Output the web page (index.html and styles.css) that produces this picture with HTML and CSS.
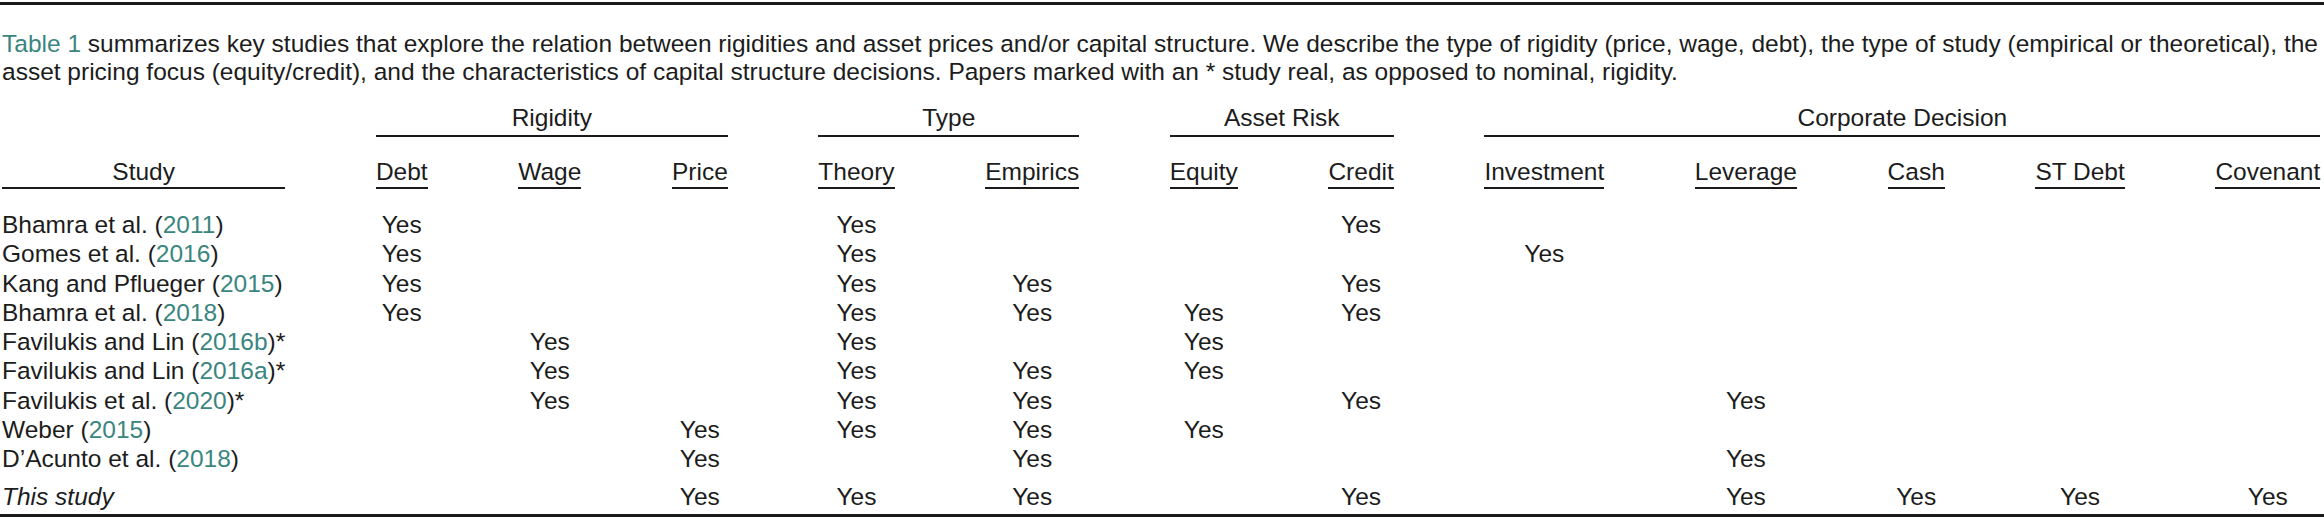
FILE: index.html
```html
<!DOCTYPE html>
<html lang="en">
<head>
<meta charset="utf-8">
<title>Table 1</title>
<link rel="stylesheet" href="styles.css">
</head>
<body>
<div class="figure">
  <p class="caption"><span class="ref">Table 1</span> summarizes key studies that explore the relation between rigidities and asset prices and/or capital structure. We describe the type of rigidity (price, wage, debt), the type of study (empirical or theoretical), the asset pricing focus (equity/credit), and the characteristics of capital structure decisions. Papers marked with an * study real, as opposed to nominal, rigidity.</p>
  <table class="studies">
    <thead>
      <tr class="groups">
        <th></th>
        <th colspan="3"><div class="rule">Rigidity</div></th>
        <th colspan="2"><div class="rule">Type</div></th>
        <th colspan="2"><div class="rule">Asset Risk</div></th>
        <th colspan="5"><div class="rule">Corporate Decision</div></th>
      </tr>
      <tr class="cols">
        <th><div class="ul">Study</div></th>
        <th><div class="ul">Debt</div></th>
        <th><div class="ul">Wage</div></th>
        <th><div class="ul">Price</div></th>
        <th><div class="ul">Theory</div></th>
        <th><div class="ul">Empirics</div></th>
        <th><div class="ul">Equity</div></th>
        <th><div class="ul">Credit</div></th>
        <th><div class="ul">Investment</div></th>
        <th><div class="ul">Leverage</div></th>
        <th><div class="ul">Cash</div></th>
        <th><div class="ul">ST Debt</div></th>
        <th><div class="ul">Covenant</div></th>
      </tr>
    </thead>
    <tbody>
      <tr>
        <td>Bhamra et al. (<span class="ref">2011</span>)</td>
        <td>Yes</td><td></td><td></td>
        <td>Yes</td><td></td>
        <td></td><td>Yes</td>
        <td></td><td></td><td></td><td></td><td></td>
      </tr>
      <tr>
        <td>Gomes et al. (<span class="ref">2016</span>)</td>
        <td>Yes</td><td></td><td></td>
        <td>Yes</td><td></td>
        <td></td><td></td>
        <td>Yes</td><td></td><td></td><td></td><td></td>
      </tr>
      <tr>
        <td>Kang and Pflueger (<span class="ref">2015</span>)</td>
        <td>Yes</td><td></td><td></td>
        <td>Yes</td><td>Yes</td>
        <td></td><td>Yes</td>
        <td></td><td></td><td></td><td></td><td></td>
      </tr>
      <tr>
        <td>Bhamra et al. (<span class="ref">2018</span>)</td>
        <td>Yes</td><td></td><td></td>
        <td>Yes</td><td>Yes</td>
        <td>Yes</td><td>Yes</td>
        <td></td><td></td><td></td><td></td><td></td>
      </tr>
      <tr>
        <td>Favilukis and Lin (<span class="ref">2016b</span>)*</td>
        <td></td><td>Yes</td><td></td>
        <td>Yes</td><td></td>
        <td>Yes</td><td></td>
        <td></td><td></td><td></td><td></td><td></td>
      </tr>
      <tr>
        <td>Favilukis and Lin (<span class="ref">2016a</span>)*</td>
        <td></td><td>Yes</td><td></td>
        <td>Yes</td><td>Yes</td>
        <td>Yes</td><td></td>
        <td></td><td></td><td></td><td></td><td></td>
      </tr>
      <tr>
        <td>Favilukis et al. (<span class="ref">2020</span>)*</td>
        <td></td><td>Yes</td><td></td>
        <td>Yes</td><td>Yes</td>
        <td></td><td>Yes</td>
        <td></td><td>Yes</td><td></td><td></td><td></td>
      </tr>
      <tr>
        <td>Weber (<span class="ref">2015</span>)</td>
        <td></td><td></td><td>Yes</td>
        <td>Yes</td><td>Yes</td>
        <td>Yes</td><td></td>
        <td></td><td></td><td></td><td></td><td></td>
      </tr>
      <tr>
        <td>D’Acunto et al. (<span class="ref">2018</span>)</td>
        <td></td><td></td><td>Yes</td>
        <td></td><td>Yes</td>
        <td></td><td></td>
        <td></td><td>Yes</td><td></td><td></td><td></td>
      </tr>
      <tr class="ours">
        <td><em>This study</em></td>
        <td></td><td></td><td>Yes</td>
        <td>Yes</td><td>Yes</td>
        <td></td><td>Yes</td>
        <td></td><td>Yes</td><td>Yes</td><td>Yes</td><td>Yes</td>
      </tr>
    </tbody>
  </table>
</div>
</body>
</html>
```

FILE: styles.css
```css
html, body {
  margin: 0;
  padding: 0;
  background: #ffffff;
}

body {
  font-family: "Liberation Sans", Arial, sans-serif;
  font-size: 24.5px;
  color: #1c1c1c;
}

.figure {
  margin-top: 2px;
  padding: 0 0 0 2px;
  border-top: 3px solid #1a1a1a;
  border-bottom: 3px solid #1a1a1a;
}

.caption {
  margin: 25px 0 18px 0;
  line-height: 28px;
}

.ref {
  color: #3b8580;
}

.studies {
  border-collapse: collapse;
  border-spacing: 0;
}

.studies th,
.studies td {
  padding: 0 45.3px;
  font-weight: normal;
  text-align: center;
  white-space: nowrap;
}

.studies th:first-child,
.studies td:first-child {
  padding-left: 0;
}

.studies th:last-child,
.studies td:last-child {
  padding-right: 0;
}

.groups th {
  line-height: 28px;
}

.rule {
  padding-bottom: 3px;
  border-bottom: 2px solid #1a1a1a;
}

.cols th {
  line-height: 28px;
  padding-top: 20.5px;
}

.ul {
  padding-bottom: 1.5px;
  border-bottom: 2px solid #1a1a1a;
}

.studies td {
  line-height: 29.25px;
}

.studies td:first-child {
  text-align: left;
}

.studies tbody tr:first-child td {
  padding-top: 21px;
}

.studies tr.ours td {
  padding-top: 9px;
  padding-bottom: 2px;
}
```
